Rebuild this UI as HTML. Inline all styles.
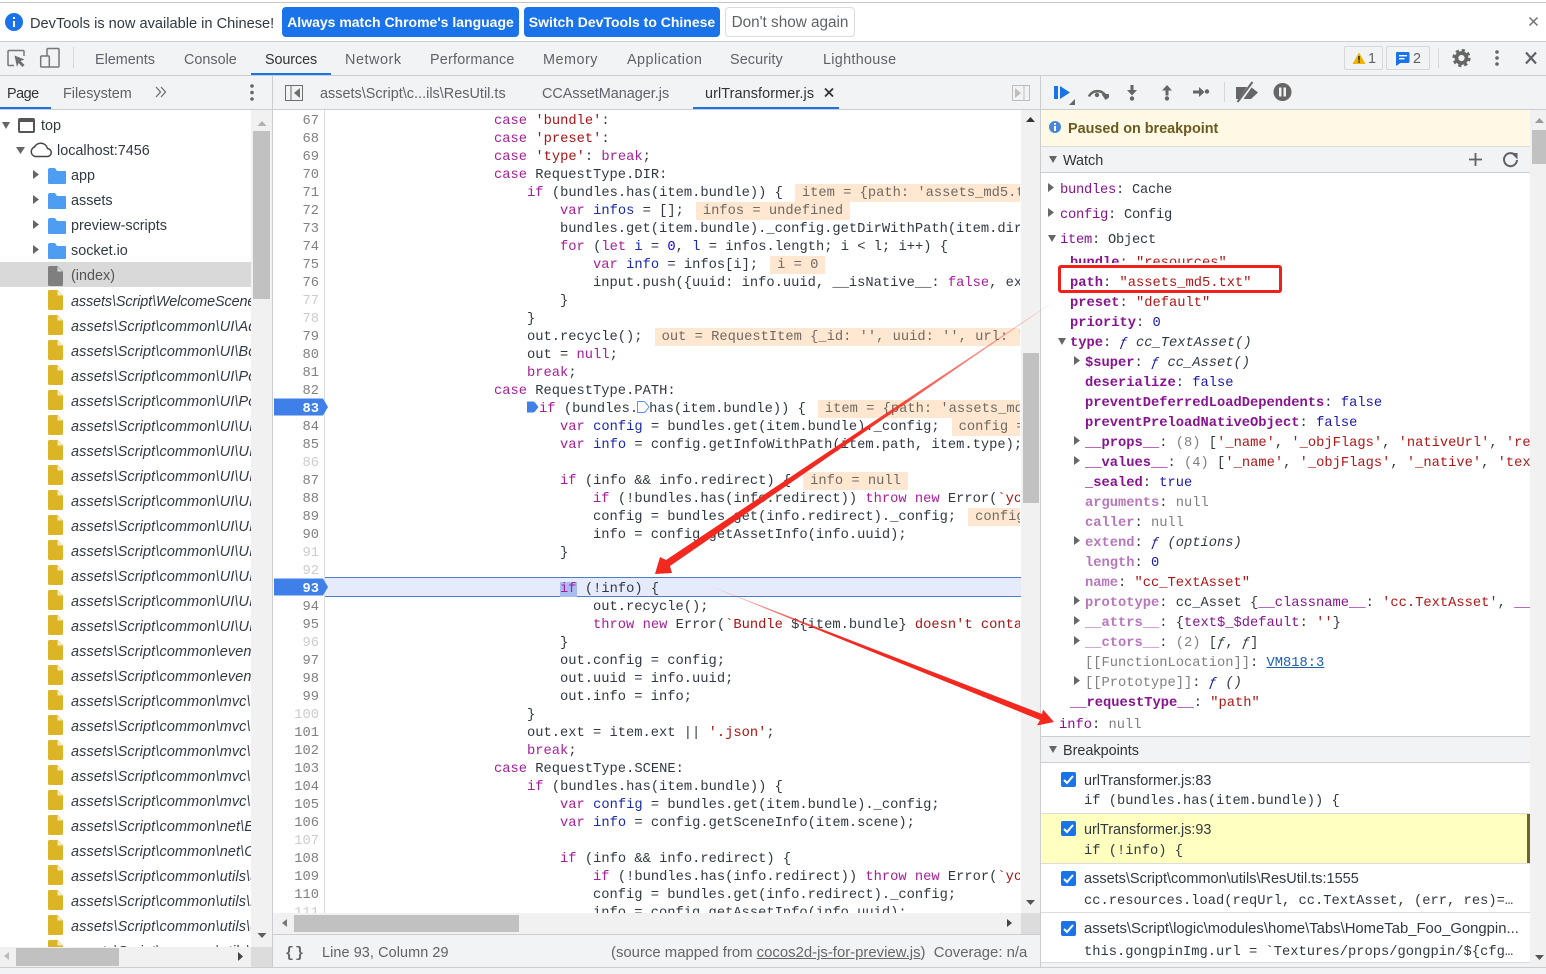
<!DOCTYPE html>
<html><head><meta charset="utf-8"><title>DevTools</title>
<style>
html,body{margin:0;padding:0;width:1546px;height:974px;overflow:hidden;background:#f1f3f4;font-family:"Liberation Sans",sans-serif;color:#303942}
.a{position:absolute}
.t{position:absolute;white-space:nowrap;font-size:14.4px;line-height:20px;color:#5f6368}
.m,.m *{font-family:"Liberation Mono",monospace;font-size:13.75px}
.m{position:absolute;left:0;top:3px;width:489px}
pre{margin:0;font-family:"Liberation Mono",monospace;font-size:13.75px;line-height:18px}
.k{color:#a71d9a}.s{color:#a81313}.d{color:#1a2aa8}.n{color:#1c00cf}
.iv{background:#ffe7d1;color:#6e6b62;margin-left:12px;padding:2px 7px 1px}
.tr{position:absolute;left:0;width:251px;height:25px;margin-top:2px;line-height:25px;padding-left:71px;box-sizing:border-box;font-size:14.4px;color:#303942;white-space:nowrap;overflow:hidden;font-style:italic;letter-spacing:.15px}
.up{font-style:normal;margin-top:1px;letter-spacing:0}
.r{position:absolute;height:20px;line-height:20px;white-space:nowrap;color:#303942}
.p{color:#881391}.b{font-weight:bold;color:#881391}.dm{color:#b172b6}.dmb{font-weight:bold;color:#b877bc}
.st{color:#b01616}.v{color:#1a1aa6}.g{color:#808080}.i{font-style:italic}
.btn{position:absolute;top:7px;height:30px;border-radius:4px;line-height:31px;text-align:center;font-size:14.4px;box-sizing:border-box;white-space:nowrap}
</style></head><body>

<!-- infobar -->
<div class="a" style="left:0;top:0;width:1546px;height:2px;background:#fff"></div>
<div class="a" style="left:0;top:2px;width:1546px;height:1px;background:#c6c6c6"></div>
<div class="a" style="left:0;top:3px;width:1546px;height:38px;background:#fff"></div>
<div class="a" style="left:0;top:41px;width:1546px;height:1px;background:#cbcdd1"></div>
<div class="t" style="left:30px;top:14px;color:#303942;font-size:14.6px">DevTools is now available in Chinese!</div>
<div class="btn" style="left:282px;width:237px;background:#1a73e8;color:#fff;font-weight:bold;font-size:14px">Always match Chrome's language</div>
<div class="btn" style="left:524px;width:196px;background:#1a73e8;color:#fff;font-weight:bold;font-size:14px">Switch DevTools to Chinese</div>
<div class="btn" style="left:725px;width:130px;background:#fff;border:1px solid #dadce0;color:#5f6368;line-height:30px;font-size:15.3px">Don't show again</div>

<!-- main toolbar -->
<div class="a" style="left:0;top:42px;width:1546px;height:33px;background:#f1f3f4"></div>
<div class="a" style="left:0;top:75px;width:1546px;height:1px;background:#cbcdd1"></div>
<div class="t" style="left:95px;top:50px">Elements</div>
<div class="t" style="left:184px;top:50px">Console</div>
<div class="t" style="left:265px;top:50px;color:#333;letter-spacing:-.1px">Sources</div>
<div class="t" style="left:345px;top:50px;letter-spacing:.55px">Network</div>
<div class="t" style="left:430px;top:50px;letter-spacing:.2px">Performance</div>
<div class="t" style="left:543px;top:50px;letter-spacing:.5px">Memory</div>
<div class="t" style="left:627px;top:50px;letter-spacing:.45px">Application</div>
<div class="t" style="left:730px;top:50px;letter-spacing:.1px">Security</div>
<div class="t" style="left:823px;top:50px;letter-spacing:.3px">Lighthouse</div>
<div class="a" style="left:251px;top:73px;width:80px;height:2px;background:#1a73e8"></div>
<div class="a" style="left:1344px;top:46px;width:39px;height:24px;border:1px solid #d5d7da;border-radius:2px;box-sizing:border-box"></div>
<div class="a" style="left:1386px;top:46px;width:44px;height:24px;border:1px solid #d5d7da;border-radius:2px;box-sizing:border-box"></div>
<div class="t" style="left:1368px;top:49px">1</div>
<div class="t" style="left:1413px;top:49px">2</div>

<!-- sub toolbar -->
<div class="a" style="left:0;top:76px;width:1546px;height:33px;background:#f1f3f4"></div>
<div class="a" style="left:0;top:109px;width:1546px;height:1px;background:#cbcdd1"></div>
<div class="t" style="left:7px;top:84px;color:#333;letter-spacing:-.5px">Page</div>
<div class="t" style="left:63px;top:84px">Filesystem</div>
<div class="a" style="left:0;top:107px;width:51px;height:2px;background:#1a73e8"></div>
<div class="t" style="left:320px;top:84px;letter-spacing:.03px">assets\Script\c...ils\ResUtil.ts</div>
<div class="t" style="left:542px;top:84px">CCAssetManager.js</div>
<div class="t" style="left:705px;top:84px;color:#333;letter-spacing:.1px">urlTransformer.js</div>
<div class="a" style="left:693px;top:107px;width:146px;height:2px;background:#1a73e8"></div>

<!-- tree -->
<div class="a" style="left:0;top:110px;width:272px;height:837px;background:#fff;overflow:hidden">
 <div class="a" style="left:0;top:152px;width:251px;height:25px;background:#d9d9d9"></div>
 <div class="tr up" style="top:3px;padding-left:41px">top</div>
 <div class="tr up" style="top:28px;padding-left:57px">localhost:7456</div>
 <div class="tr up" style="top:53px">app</div>
 <div class="tr up" style="top:78px">assets</div>
 <div class="tr up" style="top:103px">preview-scripts</div>
 <div class="tr up" style="top:128px">socket.io</div>
 <div class="tr up" style="top:153px;color:#555">(index)</div>
 <div class="tr" style="top:178px;letter-spacing:-.1px">assets\Script\WelcomeScene.ts</div>
 <div class="tr" style="top:203px">assets\Script\common\UI\Ad.ts</div>
 <div class="tr" style="top:228px">assets\Script\common\UI\Bc.ts</div>
 <div class="tr" style="top:253px">assets\Script\common\UI\Po.ts</div>
 <div class="tr" style="top:278px">assets\Script\common\UI\Po.ts</div>
 <div class="tr" style="top:303px">assets\Script\common\UI\UI.ts</div>
 <div class="tr" style="top:328px">assets\Script\common\UI\UI.ts</div>
 <div class="tr" style="top:353px">assets\Script\common\UI\UI.ts</div>
 <div class="tr" style="top:378px">assets\Script\common\UI\UI.ts</div>
 <div class="tr" style="top:403px">assets\Script\common\UI\UI.ts</div>
 <div class="tr" style="top:428px">assets\Script\common\UI\UI.ts</div>
 <div class="tr" style="top:453px">assets\Script\common\UI\UI.ts</div>
 <div class="tr" style="top:478px">assets\Script\common\UI\UI.ts</div>
 <div class="tr" style="top:503px">assets\Script\common\UI\UI.ts</div>
 <div class="tr" style="top:528px">assets\Script\common\event\a.ts</div>
 <div class="tr" style="top:553px">assets\Script\common\event\b.ts</div>
 <div class="tr" style="top:578px">assets\Script\common\mvc\a.ts</div>
 <div class="tr" style="top:603px">assets\Script\common\mvc\b.ts</div>
 <div class="tr" style="top:628px">assets\Script\common\mvc\c.ts</div>
 <div class="tr" style="top:653px">assets\Script\common\mvc\d.ts</div>
 <div class="tr" style="top:678px">assets\Script\common\mvc\e.ts</div>
 <div class="tr" style="top:703px">assets\Script\common\net\Et.ts</div>
 <div class="tr" style="top:728px">assets\Script\common\net\Ct.ts</div>
 <div class="tr" style="top:753px">assets\Script\common\utils\a.ts</div>
 <div class="tr" style="top:778px">assets\Script\common\utils\b.ts</div>
 <div class="tr" style="top:803px">assets\Script\common\utils\c.ts</div>
 <div class="tr" style="top:828px">assets\Script\common\utils\d.ts</div>
 <svg class="a" style="left:0;top:0" width="251" height="837">
  <defs>
   <symbol id="fd" width="18" height="16" viewBox="0 0 18 16"><path fill="#4d9ef3" d="M0 2a2 2 0 0 1 2-2h5l2 3h8a1 1 0 0 1 1 1v11a1 1 0 0 1-1 1H1a1 1 0 0 1-1-1z"/></symbol>
   <symbol id="fy" width="15" height="20" viewBox="0 0 15 20"><path fill="#dcb526" d="M1.5 0H9.5L15 5.5V18.5A1.5 1.5 0 0 1 13.5 20H1.5A1.5 1.5 0 0 1 0 18.5V1.5A1.5 1.5 0 0 1 1.5 0Z"/><path fill="#f6ebc4" d="M9.5 .5L14.5 5.5H9.5Z"/></symbol>
   <symbol id="fg" width="15" height="20" viewBox="0 0 15 20"><path fill="#7f7f7f" d="M1.5 0H9.5L15 5.5V18.5A1.5 1.5 0 0 1 13.5 20H1.5A1.5 1.5 0 0 1 0 18.5V1.5A1.5 1.5 0 0 1 1.5 0Z"/><path fill="#d9d9d9" d="M9.5 .5L14.5 5.5H9.5Z"/></symbol>
  </defs>
  <use href="#fd" x="48" y="58"/><use href="#fd" x="48" y="83"/><use href="#fd" x="48" y="108"/><use href="#fd" x="48" y="133"/>
  <use href="#fg" x="48" y="156"/>
  <use href="#fy" x="48" y="180"/><use href="#fy" x="48" y="205"/><use href="#fy" x="48" y="230"/><use href="#fy" x="48" y="255"/><use href="#fy" x="48" y="280"/><use href="#fy" x="48" y="305"/><use href="#fy" x="48" y="330"/><use href="#fy" x="48" y="355"/><use href="#fy" x="48" y="380"/><use href="#fy" x="48" y="405"/><use href="#fy" x="48" y="430"/><use href="#fy" x="48" y="455"/><use href="#fy" x="48" y="480"/><use href="#fy" x="48" y="505"/><use href="#fy" x="48" y="530"/><use href="#fy" x="48" y="555"/><use href="#fy" x="48" y="580"/><use href="#fy" x="48" y="605"/><use href="#fy" x="48" y="630"/><use href="#fy" x="48" y="655"/><use href="#fy" x="48" y="680"/><use href="#fy" x="48" y="705"/><use href="#fy" x="48" y="730"/><use href="#fy" x="48" y="755"/><use href="#fy" x="48" y="780"/><use href="#fy" x="48" y="805"/><use href="#fy" x="48" y="830"/>
  <path fill="#666" d="M2 12h8l-4 7zM16 37h9l-4.5 7zM33 60l6 4.500-6 4.500zM33 85l6 4.500-6 4.500zM33 110l6 4.500-6 4.500zM33 135l6 4.500-6 4.500z"/>
  <rect x="19" y="9" width="15" height="13" rx="1" fill="none" stroke="#555" stroke-width="2"/><rect x="19" y="9" width="15" height="3" fill="#555"/>
  <path fill="none" stroke="#444" stroke-width="1.500" d="M35 46.500h12a4 4 0 0 0 .5-8 7 7 0 0 0-13-1.500 5 5 0 0 0 .5 9.500z"/>
 </svg>
 <!-- tree vscroll -->
 <div class="a" style="left:251px;top:0;width:21px;height:837px;background:#f1f1f1"></div>
 <div class="a" style="left:253px;top:21px;width:17px;height:168px;background:#c1c1c1"></div>
</div>
<div class="a" style="left:272px;top:76px;width:1px;height:891px;background:#cbcdd1"></div>
<!-- left hscroll -->
<div class="a" style="left:0;top:947px;width:251px;height:20px;background:#f1f1f1"></div>
<div class="a" style="left:16px;top:948px;width:103px;height:18px;background:#c1c1c1"></div>
<div class="a" style="left:251px;top:947px;width:21px;height:20px;background:#dcdcdc"></div>

<!-- editor -->
<div class="a" style="left:273px;top:110px;width:748px;height:803px;background:#fff;overflow:hidden">
 <div class="a" style="left:51px;top:0;width:1px;height:803px;background:#dedede"></div>
 <div class="a" style="left:52px;top:467px;width:696px;height:20px;box-sizing:border-box;background:#e5ebfb;border-top:1px solid #4d7dc6;border-bottom:1px solid #4d7dc6"></div>
 <svg class="a" style="left:0;top:0" width="56" height="500"><path fill="#3f7fe8" d="M1 288.500H50L55 297 50 305.500H1z"/><path fill="#3f7fe8" d="M1 468.500H50L55 477 50 485.500H1z"/></svg>
 <pre class="a" style="left:0;top:0;width:46px;text-align:right;color:#808080;transform:translateY(3px)">67
68
69
70
71
72
73
74
75
76
<span style="color:#ccc">77
78</span>
79
80
81
82
<span style="color:#fff;font-weight:bold">83</span>
84
85
<span style="color:#ccc">86</span>
87
88
89
90
<span style="color:#ccc">91
92</span>
<span style="color:#fff;font-weight:bold">93</span>
94
95
<span style="color:#ccc">96</span>
97
98
99
<span style="color:#ccc">100</span>
101
102
103
104
105
106
<span style="color:#ccc">107</span>
108
109
110
<span style="color:#ccc">111</span></pre>
 <pre class="a" style="left:56px;top:3px;width:691px;overflow:hidden;color:#303942">                    <span class="k">case</span> <span class="s">'bundle'</span>:
                    <span class="k">case</span> <span class="s">'preset'</span>:
                    <span class="k">case</span> <span class="s">'type'</span>: <span class="k">break</span>;
                    <span class="k">case</span> RequestType.DIR:
                        <span class="k">if</span> (bundles.has(item.bundle)) {<span class="iv">item = {path: 'assets_md5.txt', bundle: 'resources'}</span>
                            <span class="k">var</span> <span class="d">infos</span> = [];<span class="iv">infos = undefined</span>
                            bundles.get(item.bundle)._config.getDirWithPath(item.dir, item.type, infos);
                            <span class="k">for</span> (<span class="k">let</span> <span class="d">i</span> = <span class="n">0</span>, <span class="d">l</span> = infos.length; i &lt; l; i++) {
                                <span class="k">var</span> <span class="d">info</span> = infos[i];<span class="iv">i = 0</span>
                                input.push({uuid: info.uuid, __isNative__: <span class="k">false</span>, ext: info.ext});
                            }
                        }
                        out.recycle();<span class="iv">out = RequestItem {_id: '', uuid: '', url: '', ext: '.json'}</span>
                        out = <span class="k">null</span>;
                        <span class="k">break</span>;
                    <span class="k">case</span> RequestType.PATH:
                        <span style="display:inline-block;width:12px;height:0"></span><span class="k">if</span> (bundles.<span style="display:inline-block;width:11px;height:0"></span>has(item.bundle)) {<span class="iv">item = {path: 'assets_md5.txt', bundle: 'res'}</span>
                            <span class="k">var</span> <span class="d">config</span> = bundles.get(item.bundle)._config;<span class="iv">config = Config</span>
                            <span class="k">var</span> <span class="d">info</span> = config.getInfoWithPath(item.path, item.type);

                            <span class="k">if</span> (info &amp;&amp; info.redirect) {<span class="iv">info = null</span>
                                <span class="k">if</span> (!bundles.has(info.redirect)) <span class="k">throw</span> <span class="k">new</span> Error(<span class="s">`you need to load</span>
                                config = bundles.get(info.redirect)._config;<span class="iv">config = Config</span>
                                info = config.getAssetInfo(info.uuid);
                            }

                            <span class="k" style="background:#a9bcf2">if</span> (!info) {
                                out.recycle();
                                <span class="k">throw</span> <span class="k">new</span> Error(<span class="s">`Bundle </span>${item.bundle}<span class="s"> doesn't contain the item</span>
                            }
                            out.config = config;
                            out.uuid = info.uuid;
                            out.info = info;
                        }
                        out.ext = item.ext || <span class="s">'.json'</span>;
                        <span class="k">break</span>;
                    <span class="k">case</span> RequestType.SCENE:
                        <span class="k">if</span> (bundles.has(item.bundle)) {
                            <span class="k">var</span> <span class="d">config</span> = bundles.get(item.bundle)._config;
                            <span class="k">var</span> <span class="d">info</span> = config.getSceneInfo(item.scene);

                            <span class="k">if</span> (info &amp;&amp; info.redirect) {
                                <span class="k">if</span> (!bundles.has(info.redirect)) <span class="k">throw</span> <span class="k">new</span> Error(<span class="s">`you need to load</span>
                                config = bundles.get(info.redirect)._config;
                                info = config.getAssetInfo(info.uuid);</pre>
 <svg class="a" style="left:0;top:0" width="748" height="320"><path fill="#3f7fe8" d="M254 291.500h6a3 3 0 0 1 2 1l3.500 4.500-3.500 4.500a3 3 0 0 1-2 1h-6z"/><path fill="#fff" stroke="#5b93e8" d="M364.500 291.500h6a3 3 0 0 1 2 1l3.500 4.500-3.500 4.500a3 3 0 0 1-2 1h-6z"/></svg>
</div>
<!-- editor scrollbars -->
<div class="a" style="left:1021px;top:110px;width:19px;height:803px;background:#f1f1f1"></div>
<div class="a" style="left:1023px;top:353px;width:16px;height:150px;background:#c1c1c1"></div>
<div class="a" style="left:273px;top:913px;width:748px;height:21px;background:#f1f1f1"></div>
<div class="a" style="left:294px;top:915px;width:225px;height:17px;background:#c1c1c1"></div>
<div class="a" style="left:1021px;top:913px;width:19px;height:21px;background:#dcdcdc"></div>
<div class="a" style="left:273px;top:934px;width:767px;height:1px;background:#cbcdd1"></div>
<!-- status -->
<div class="t" style="left:322px;top:943px;color:#5f6368;letter-spacing:.1px">Line 93, Column 29</div>
<div class="t" style="left:611px;top:943px;color:#666;font-size:14.9px">(source mapped from <u>cocos2d-js-for-preview.js</u>)&nbsp; Coverage: n/a</div>
<div class="a" style="left:0;top:967px;width:1546px;height:1px;background:#cbcdd1"></div>
<div class="a" style="left:1040px;top:76px;width:1px;height:891px;background:#cbcdd1"></div>

<!-- right panel -->
<div class="a" style="left:1041px;top:110px;width:489px;height:853px;background:#fff;overflow:hidden">
 <div class="a" style="left:0;top:0;width:489px;height:36px;background:#fef9e5"></div>
 <div class="a" style="left:0;top:36px;width:489px;height:1px;background:#dcdcdc"></div>
 <div class="a" style="left:0;top:37px;width:489px;height:25px;background:#f1f3f4"></div>
 <div class="a" style="left:0;top:62px;width:489px;height:1px;background:#cbcdd1"></div>
 <div class="t" style="left:27px;top:9px;font-weight:bold;color:#6b5a1f;font-size:14.4px">Paused on breakpoint</div>
 <div class="t" style="left:22px;top:41px;color:#333;font-size:14.4px">Watch</div>
 <div class="m">
 <div class="r" style="left:19px;top:68px;letter-spacing:-.25px"><span class="p" style="letter-spacing:-.25px">bundles</span>: Cache</div>
 <div class="r" style="left:19px;top:93px;letter-spacing:-.25px"><span class="p" style="letter-spacing:-.25px">config</span>: Config</div>
 <div class="r" style="left:19px;top:118px;letter-spacing:-.25px"><span class="p" style="letter-spacing:-.25px">item</span>: Object</div>
 <div class="r" style="left:29px;top:141px;height:9px;overflow:hidden"><span class="b">bundle</span>: <span class="st">"resources"</span></div>
 <div class="r" style="left:29px;top:161px"><span class="b">path</span>: <span class="st">"assets_md5.txt"</span></div>
 <div class="r" style="left:29px;top:181px"><span class="b">preset</span>: <span class="st">"default"</span></div>
 <div class="r" style="left:29px;top:201px"><span class="b">priority</span>: <span class="v">0</span></div>
 <div class="r" style="left:29px;top:221px"><span class="b">type</span>: <span class="i"><span class="v">ƒ</span> cc_TextAsset()</span></div>
 <div class="r" style="left:44px;top:241px"><span class="b">$super</span>: <span class="i"><span class="v">ƒ</span> cc_Asset()</span></div>
 <div class="r" style="left:44px;top:261px"><span class="b">deserialize</span>: <span class="v">false</span></div>
 <div class="r" style="left:44px;top:281px"><span class="b">preventDeferredLoadDependents</span>: <span class="v">false</span></div>
 <div class="r" style="left:44px;top:301px"><span class="b">preventPreloadNativeObject</span>: <span class="v">false</span></div>
 <div class="r" style="left:44px;top:321px"><span class="b">__props__</span>: <span class="g">(8)</span> [<span class="st">'_name'</span>, <span class="st">'_objFlags'</span>, <span class="st">'nativeUrl'</span>, <span class="st">'res'</span></div>
 <div class="r" style="left:44px;top:341px"><span class="b">__values__</span>: <span class="g">(4)</span> [<span class="st">'_name'</span>, <span class="st">'_objFlags'</span>, <span class="st">'_native'</span>, <span class="st">'text'</span></div>
 <div class="r" style="left:44px;top:361px"><span class="b">_sealed</span>: <span class="v">true</span></div>
 <div class="r" style="left:44px;top:381px"><span class="dmb">arguments</span>: <span class="g">null</span></div>
 <div class="r" style="left:44px;top:401px"><span class="dmb">caller</span>: <span class="g">null</span></div>
 <div class="r" style="left:44px;top:421px"><span class="dmb">extend</span>: <span class="i"><span class="v">ƒ</span> (options)</span></div>
 <div class="r" style="left:44px;top:441px"><span class="dmb">length</span>: <span class="v">0</span></div>
 <div class="r" style="left:44px;top:461px"><span class="dmb">name</span>: <span class="st">"cc_TextAsset"</span></div>
 <div class="r" style="left:44px;top:481px"><span class="dmb">prototype</span>: cc_Asset {<span class="p">__classname__</span>: <span class="st">'cc.TextAsset'</span>, <span class="p">__cid__</span></div>
 <div class="r" style="left:44px;top:501px"><span class="dmb">__attrs__</span>: {<span class="p">text$_$default</span>: <span class="st">''</span>}</div>
 <div class="r" style="left:44px;top:521px"><span class="dmb">__ctors__</span>: <span class="g">(2)</span> [<span class="i">ƒ</span>, <span class="i">ƒ</span>]</div>
 <div class="r" style="left:44px;top:541px"><span class="g">[[FunctionLocation]]</span>: <u style="color:#1a5fb4">VM818:3</u></div>
 <div class="r" style="left:44px;top:561px"><span class="g">[[Prototype]]</span>: <span class="i"><span class="v">ƒ</span> ()</span></div>
 <div class="r" style="left:29px;top:581px"><span class="b">__requestType__</span>: <span class="st">"path"</span></div>
 <div class="r" style="left:18px;top:603px"><span class="p">info</span>: <span class="g">null</span></div>
 </div>
 <div class="a" style="left:0;top:626px;width:489px;height:1px;background:#cbcdd1"></div>
 <div class="a" style="left:0;top:627px;width:489px;height:25px;background:#f1f3f4"></div>
 <div class="a" style="left:0;top:652px;width:489px;height:1px;background:#cbcdd1"></div>
 <div class="t" style="left:22px;top:631px;color:#333;font-size:14.4px">Breakpoints</div>
 <div class="a" style="left:0;top:703px;width:489px;height:50px;background:#ffffc0"></div>
 <div class="a" style="left:486px;top:703px;width:3px;height:50px;background:#6f6330"></div>
 <div class="a" style="left:0;top:703px;width:489px;height:1px;background:#dcdcdc"></div>
 <div class="a" style="left:0;top:753px;width:489px;height:1px;background:#dcdcdc"></div>
 <div class="a" style="left:0;top:802px;width:489px;height:1px;background:#dcdcdc"></div>
 <div class="a" style="left:0;top:852px;width:489px;height:1px;background:#dcdcdc"></div>
 <div class="t" style="left:43px;top:661px;color:#303942;font-size:14.4px">urlTransformer.js:83</div>
 <div class="t" style="left:43px;top:710px;color:#303942;font-size:14.4px">urlTransformer.js:93</div>
 <div class="t" style="left:43px;top:759px;color:#303942;font-size:14.5px">assets\Script\common\utils\ResUtil.ts:1555</div>
 <div class="t" style="left:43px;top:809px;color:#303942;font-size:14.85px">assets\Script\logic\modules\home\Tabs\HomeTab_Foo_Gongpin...</div>
 <div class="m">
 <div class="r" style="left:43px;top:679px">if (bundles.has(item.bundle)) {</div>
 <div class="r" style="left:43px;top:729px">if (!info) {</div>
 <div class="r" style="left:43px;top:779px">cc.resources.load(reqUrl, cc.TextAsset, (err, res)=…</div>
 <div class="r" style="left:43px;top:830px">this.gongpinImg.url = `Textures/props/gongpin/${cfg…</div>
 </div>
</div>
<div class="a" style="left:1530px;top:110px;width:16px;height:857px;background:#f1f1f1"></div>
<div class="a" style="left:1532px;top:130px;width:14px;height:34px;background:#c1c1c1"></div>

<!-- red box -->
<div class="a" style="left:1058px;top:265px;width:224px;height:28px;box-sizing:border-box;border:3px solid #f0201a;border-radius:3px"></div>

<!-- icon overlay -->
<svg class="a" style="left:0;top:0" width="1546" height="974">
 <defs>
  <linearGradient id="g1" gradientUnits="userSpaceOnUse" x1="1056" y1="300" x2="860" y2="435"><stop offset="0" stop-color="#f3281e" stop-opacity=".25"/><stop offset="1" stop-color="#f3281e"/></linearGradient>
  <linearGradient id="g2" gradientUnits="userSpaceOnUse" x1="710" y1="586" x2="830" y2="634"><stop offset="0" stop-color="#f3281e" stop-opacity=".25"/><stop offset="1" stop-color="#f3281e"/></linearGradient>
 </defs>
 <!-- info -->
 <circle cx="14" cy="22" r="9" fill="#1a73e8"/><rect x="13" y="21" width="2" height="6" fill="#fff"/><rect x="13" y="17" width="2" height="2" fill="#fff"/>
 <path fill="none" stroke="#6e6e6e" stroke-width="1.500" d="M1529.500 17.500l8 8m0-8l-8 8"/>
 <!-- inspect -->
 <path fill="none" stroke="#777" stroke-width="1.500" d="M14 65.500H9a1 1 0 0 1-1-1V51.500a1 1 0 0 1 1-1H23a1 1 0 0 1 1 1V56"/>
 <path fill="#6e6e6e" d="M14.500 55.500l10 4-4 1.500 4 4-2 2-4-4-1.500 4z"/>
 <!-- device -->
 <path fill="none" stroke="#777" stroke-width="1.500" d="M47 56V49.500a1 1 0 0 1 1-1H58a1 1 0 0 1 1 1V66a1 1 0 0 1-1 1H48"/>
 <rect x="40.700" y="56" width="8.600" height="11" rx="1" fill="#f1f3f4" stroke="#777" stroke-width="1.500"/>
 <rect x="73" y="47" width="1" height="21" fill="#d5d7da"/>
 <!-- warn -->
 <path fill="#f0b400" d="M1359 52.500l6.500 11.500h-13z"/><rect x="1358.200" y="56" width="1.600" height="4.500" fill="#333"/><rect x="1358.200" y="61.200" width="1.600" height="1.500" fill="#333"/>
 <path fill="#1a73e8" d="M1397.500 52h10.500a1.500 1.500 0 0 1 1.500 1.500v8a1.500 1.500 0 0 1-1.500 1.500h-7.500l-4.500 3v-13a1 1 0 0 1 1-1z"/><rect x="1399" y="55" width="8" height="1.400" fill="#fff"/><rect x="1399" y="58" width="5.500" height="1.400" fill="#fff"/>
 <rect x="1438" y="48" width="1" height="20" fill="#d5d7da"/>
 <!-- gear -->
 <circle cx="1461.500" cy="58" r="5" fill="none" stroke="#666" stroke-width="3.800"/>
 <circle cx="1461.500" cy="58" r="7.800" fill="none" stroke="#666" stroke-width="2.600" stroke-dasharray="3.200 2.925"/>
 <!-- dots -->
 <circle cx="1497" cy="52" r="1.800" fill="#666"/><circle cx="1497" cy="58" r="1.800" fill="#666"/><circle cx="1497" cy="64" r="1.800" fill="#666"/>
 <path fill="none" stroke="#5f6368" stroke-width="2.200" d="M1526 52.500l10 11m0-11l-10 11"/>
 <!-- sub toolbar left -->
 <path fill="none" stroke="#6e6e6e" stroke-width="1.300" d="M156 87l4.500 5-4.500 5M161 87l4.500 5-4.500 5"/>
 <circle cx="252" cy="86" r="1.800" fill="#666"/><circle cx="252" cy="92.500" r="1.800" fill="#666"/><circle cx="252" cy="99" r="1.800" fill="#666"/>
 <rect x="285.500" y="85.500" width="17" height="15" fill="none" stroke="#6e6e6e"/><rect x="290.500" y="85.500" width="1" height="15" fill="#6e6e6e"/><path fill="#6e6e6e" d="M300 88v10l-6-5z"/>
 <path fill="none" stroke="#333" stroke-width="1.800" d="M825 88.500l8 8m0-8l-8 8"/>
 <rect x="1012.500" y="85.500" width="17" height="15" fill="none" stroke="#bdbdbd"/><rect x="1023.500" y="85.500" width="1" height="15" fill="#bdbdbd"/><path fill="#bdbdbd" d="M1015 88v10l6-5z"/>
 <!-- tree/editor scroll arrows -->
 <path fill="#b0b0b0" d="M257.500 126l4.500-5 4.500 5z"/><path fill="#5f5f5f" d="M257.500 933l4.500 5 4.500-5z"/>
 <path fill="#bbb" d="M9 952v8l-5-4z"/><path fill="#444" d="M238 952v9l5-4.500z"/>
 <path fill="#333" d="M1026 122l4.500-5 4.500 5z"/><path fill="#555" d="M1026 900l4.500 5 4.500-5z"/>
 <path fill="#777" d="M287 919v8l-5-4z"/><path fill="#444" d="M1007 919v8l5-4z"/>
 <path fill="#999" d="M1535 123l4.500-5 4.500 5z"/><path fill="#555" d="M1535 955l4.500 5 4.500-5z"/>
 <!-- {} -->
 <text x="285" y="957" font-family="Liberation Mono,monospace" font-size="15" font-weight="bold" letter-spacing="1" fill="#666">{}</text>
 <!-- debugger -->
 <rect x="1054" y="86" width="4" height="13" fill="#1a73e8"/><path fill="#1a73e8" d="M1060 86l10 6.500-10 6.500z"/><path fill="#666" d="M1075 99v6h-6z"/>
 <path fill="none" stroke="#666" stroke-width="2.400" d="M1089 96.500a9 8 0 0 1 17 0"/><path fill="#666" d="M1101.500 94h7.500v3.500l-3.500 2.500z"/><circle cx="1097" cy="95" r="2.200" fill="#666"/>
 <path fill="#666" d="M1130.500 85h3v5h3.500l-5 5.500-5-5.500h3.500z"/><circle cx="1132" cy="98.500" r="2.200" fill="#666"/>
 <path fill="#666" d="M1167 85l5 5.500h-3.500v5h-3v-5h-3.500z"/><circle cx="1167" cy="98.500" r="2.200" fill="#666"/>
 <path fill="#666" d="M1193 90.500h6v-3.500l5.500 5-5.500 5v-3.500h-6z"/><circle cx="1207" cy="91.500" r="2.200" fill="#666"/>
 <rect x="1224" y="82" width="1" height="20" fill="#d5d7da"/>
 <path fill="#666" d="M1236 87h15l7 5.500-7 6.500h-15z"/><path stroke="#f1f3f4" stroke-width="4" d="M1239 102l14-20"/><path stroke="#666" stroke-width="2" d="M1237.500 102l15-20"/>
 <circle cx="1282.500" cy="92" r="9" fill="#666"/><rect x="1279" y="87.500" width="2.500" height="9" fill="#f1f3f4"/><rect x="1283.500" y="87.500" width="2.500" height="9" fill="#f1f3f4"/>
 <!-- info paused -->
 <circle cx="1055" cy="127" r="6" fill="#4a86d8"/><rect x="1054" y="126" width="2" height="5" fill="#fff"/><rect x="1054" y="123" width="2" height="1.800" fill="#fff"/>
 <path fill="#666" d="M1049 156h8l-4 7zM1049 746h8l-4 7zM1048 183l6 4.500-6 4.500zM1048 208l6 4.500-6 4.500zM1048 235h8l-4 7zM1058 338h8l-4 7zM1074 356l6 4.500-6 4.500zM1074 436l6 4.500-6 4.500zM1074 456l6 4.500-6 4.500zM1074 536l6 4.500-6 4.500zM1074 596l6 4.500-6 4.500zM1074 616l6 4.500-6 4.500zM1074 636l6 4.500-6 4.500zM1074 676l6 4.500-6 4.500z"/>
 <path fill="none" stroke="#5f6368" stroke-width="1.800" d="M1475.500 153v13M1469 159.500h13"/>
 <path fill="none" stroke="#5f6368" stroke-width="2" d="M1515.500 155.500a6.500 6.500 0 1 0 1.500 4.500"/><path fill="#5f6368" d="M1511 153h6.500v6.500z"/>
 <!-- checkboxes -->
 <g fill="#1a73e8"><rect x="1061" y="772" width="15" height="15" rx="2"/><rect x="1061" y="821" width="15" height="15" rx="2"/><rect x="1061" y="871" width="15" height="15" rx="2"/><rect x="1061" y="921" width="15" height="15" rx="2"/></g>
 <g fill="none" stroke="#fff" stroke-width="2"><path d="M1064 780l3 3 6-7"/><path d="M1064 829l3 3 6-7"/><path d="M1064 879l3 3 6-7"/><path d="M1064 929l3 3 6-7"/></g>
 <!-- red arrows -->
 <path fill="url(#g1)" d="M655 574L672 573 670 566 1056 300 666 560 660 557z"/>
 <path fill="url(#g2)" d="M1054 722L1043 709.500 1042 714 710 586 1040 720 1037 725.500z"/>
</svg>
</body></html>
